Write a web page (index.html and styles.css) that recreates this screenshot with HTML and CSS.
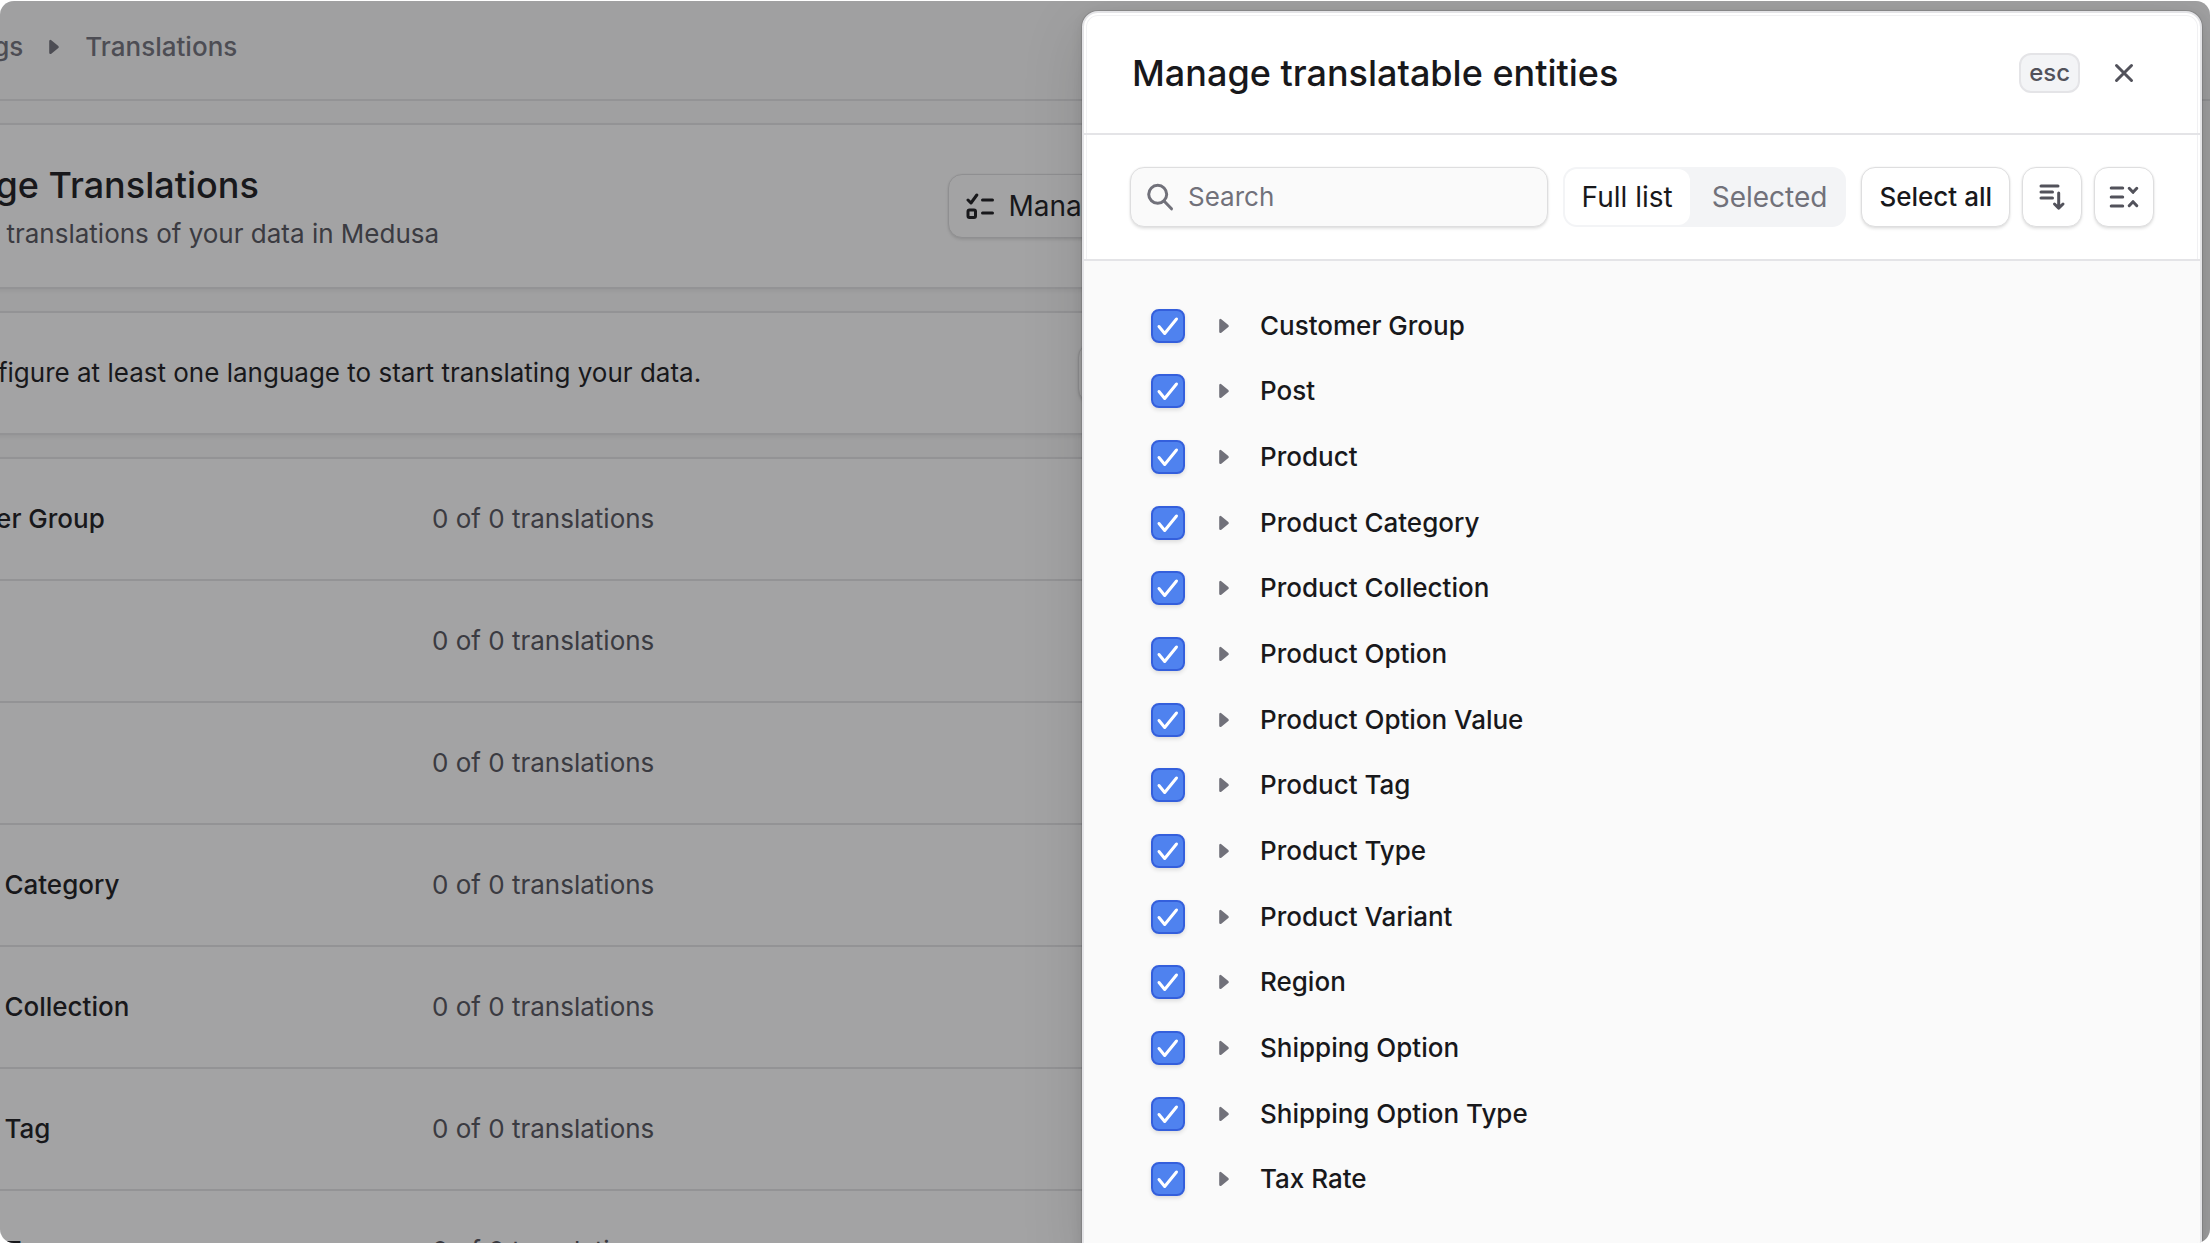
FILE: index.html
```html
<!DOCTYPE html>
<html lang="en">
<head>
<meta charset="utf-8">
<meta name="viewport" content="width=device-width, initial-scale=1">
<title>Translations - Medusa</title>
<link rel="stylesheet" href="styles.css">
</head>
<body>
<svg class="sprite" aria-hidden="true">
  <symbol id="triangle" viewBox="0 0 30 30"><path d="M11.500 9.200v11.600l7-5.800z" fill="currentColor" stroke="currentColor" stroke-width="2.600" stroke-linejoin="round"/></symbol>
</svg>
<div class="frame">
  <div class="page">
    <nav class="topbar" aria-label="Breadcrumb">
      <a href="#settings">Settings</a>
      <svg class="icon" aria-hidden="true"><use href="#triangle"/></svg>
      <span>Translations</span>
    </nav>
    <main class="content">
      <section class="card card-intro">
        <div>
          <h1>Manage Translations</h1>
          <p>Manage translations of your data in Medusa</p>
        </div>
        <button class="button button-large" type="button">
          <svg class="icon icon-line" viewBox="0 0 30 30" aria-hidden="true"><path d="M2 9l3 3 5.800-8M16.500 9h10M16.500 22h10"/><rect x="2" y="19" width="7.500" height="7.500" rx="1.500"/></svg>
          Manage entities
        </button>
      </section>
      <section class="card card-notice">
        <svg class="icon icon-line" viewBox="0 0 30 30" aria-hidden="true"><circle cx="15" cy="15" r="12"/><path d="M15 14v7M15 9v.1"/></svg>
        <p>Configure at least one language to start translating your data.</p>
        <button class="button" type="button">Configure</button>
      </section>
      <section class="card">
        <table class="counts">
          <tbody>
            <tr><th scope="row">Customer Group</th><td>0 of 0 translations</td></tr>
            <tr><th scope="row">Post</th><td>0 of 0 translations</td></tr>
            <tr><th scope="row">Product</th><td>0 of 0 translations</td></tr>
            <tr><th scope="row">Product Category</th><td>0 of 0 translations</td></tr>
            <tr><th scope="row">Product Collection</th><td>0 of 0 translations</td></tr>
            <tr><th scope="row">Product Tag</th><td>0 of 0 translations</td></tr>
            <tr><th scope="row">Product Type</th><td>0 of 0 translations</td></tr>
          </tbody>
        </table>
      </section>
    </main>
  </div>
  <div class="overlay"></div>
  <aside class="drawer" role="dialog" aria-labelledby="drawer-title">
    <header class="drawer-header">
      <h2 id="drawer-title">Manage translatable entities</h2>
      <kbd>esc</kbd>
      <button class="close" type="button" aria-label="Close">
        <svg class="icon icon-line" viewBox="0 0 30 30" aria-hidden="true"><path d="M7.500 7.500l15 15M22.500 7.500l-15 15"/></svg>
      </button>
    </header>
    <div class="toolbar">
      <label class="search">
        <svg class="icon icon-line" viewBox="0 0 30 30" aria-hidden="true"><circle cx="12.700" cy="12.300" r="9"/><path d="M19 19l7.500 7.800"/></svg>
        <input type="search" placeholder="Search" aria-label="Search">
      </label>
      <div class="tabs" role="tablist">
        <button class="tab tab-active" type="button" role="tab" aria-selected="true">Full list</button>
        <button class="tab" type="button" role="tab" aria-selected="false">Selected</button>
      </div>
      <div class="actions">
        <button class="button" type="button">Select all</button>
        <button class="button button-icon" type="button" aria-label="Expand all">
          <svg class="icon icon-line" viewBox="0 0 30 30" aria-hidden="true"><path d="M4 4h17M4 10h11.500M4 16h11.500M21.700 11v15M17.500 22l4.200 4.200L26 22"/></svg>
        </button>
        <button class="button button-icon" type="button" aria-label="Collapse all">
          <svg class="icon icon-line" viewBox="0 0 30 30" aria-hidden="true"><path d="M2.200 6h11.500M2.200 15h11.500M2.200 24h11.500M20.200 6.300l3.800 4 3.800-4M20.200 23.700l3.800-4 3.800 4"/></svg>
        </button>
      </div>
    </div>
    <ul class="entities" id="entities"></ul>
  </aside>
</div>
<script src="entities.js"></script>
</body>
</html>
```
FILE: entities.js
```js
const names = [
  "Customer Group", "Post", "Product", "Product Category", "Product Collection",
  "Product Option", "Product Option Value", "Product Tag", "Product Type",
  "Product Variant", "Region", "Shipping Option", "Shipping Option Type", "Tax Rate"
];

document.getElementById("entities").innerHTML = names.map((name, i) => `
  <li class="entity">
    <input type="checkbox" id="entity-${i}" checked>
    <button class="toggle" type="button" aria-label="Expand ${name}" aria-expanded="false">
      <svg class="icon" aria-hidden="true"><use href="#triangle"/></svg>
    </button>
    <label for="entity-${i}">${name}</label>
  </li>`).join("");
```
FILE: styles.css
```css
:root {
  --text: #18181b;
  --subtle: #52525b;
  --muted: #71717a;
  --line: #e4e4e7;
  --base: #ffffff;
  --soft: #fafafa;
  --component: #f3f4f6;
  --lift: 0 0 0 1px rgba(0, 0, 0, 0.02), 0 2px 3px rgba(0, 0, 0, 0.1);
}

* {
  box-sizing: border-box;
}

body {
  margin: 0;
  background: var(--base);
  color: var(--text);
  font: 500 26px/40px Inter, "Liberation Sans", sans-serif;
}

h1, h2, p, ul {
  margin: 0;
  padding: 0;
  font-weight: 500;
}

button, input {
  font: inherit;
  color: inherit;
}

.sprite {
  display: none;
}

.icon {
  display: block;
  flex: none;
  width: 30px;
  height: 30px;
}

.icon-line {
  fill: none;
  stroke: currentColor;
  stroke-width: 3;
  stroke-linecap: round;
  stroke-linejoin: round;
}

.frame {
  position: relative;
  height: calc(100vh - 1px);
  margin-top: 1px;
  overflow: hidden;
  border-radius: 14px;
  background: var(--soft);
}

/* The page behind the drawer is scrolled sideways past its left edge. */
.page {
  margin-left: -148px;
}

.topbar {
  display: flex;
  align-items: center;
  gap: 16px;
  height: 100px;
  padding: 0 70px 6px;
  border-bottom: 2px solid var(--line);
  color: var(--muted);
}

.topbar a {
  color: inherit;
  text-decoration: none;
}

.content {
  display: flex;
  flex-direction: column;
  gap: 22px;
  max-width: 1433px;
  padding-top: 22px;
}

.card {
  border: 2px solid var(--line);
  border-radius: 16px;
  background: var(--base);
  box-shadow: 0 2px 4px rgba(0, 0, 0, 0.06);
}

.card-intro,
.card-notice {
  display: flex;
  align-items: center;
  padding: 0 46px;
}

.card-intro {
  justify-content: space-between;
  min-height: 166px;
}

.card-intro h1 {
  margin-bottom: 2px;
  font-size: 36px;
  line-height: 54px;
}

.card p {
  font-weight: 400;
}

.card-intro p {
  color: var(--subtle);
}

.card-notice {
  gap: 18px;
  min-height: 124px;
}

.card-notice .button {
  margin-left: auto;
}

.counts {
  width: 100%;
  border-spacing: 0;
}

.counts th,
.counts td {
  height: 122px;
  padding: 0;
  border-bottom: 2px solid var(--line);
  text-align: left;
}

.counts th {
  width: 578px;
  padding-left: 46px;
  font-weight: 500;
}

.counts td {
  color: var(--subtle);
  font-weight: 400;
}

.overlay {
  position: absolute;
  inset: 0;
  background: rgba(24, 24, 27, 0.4);
}

.drawer {
  position: absolute;
  top: 10px;
  right: 8px;
  bottom: -20px;
  display: flex;
  flex-direction: column;
  width: 1120px;
  max-width: calc(100% - 16px);
  border: 2px solid var(--line);
  border-radius: 16px;
  background: var(--base);
  box-shadow:
    inset 0 0 0 2px var(--base),
    inset 0 0 0 3px #f1f1f3,
    0 0 0 1px rgba(0, 0, 0, 0.1),
    0 4px 12px rgba(0, 0, 0, 0.1),
    0 16px 64px rgba(0, 0, 0, 0.12);
}

.drawer-header {
  display: flex;
  align-items: center;
  gap: 14px;
  height: 122px;
  padding: 0 46px 0 48px;
  border-bottom: 2px solid var(--line);
}

.drawer-header h2 {
  flex: 1;
  font-size: 36px;
}

kbd {
  padding: 0 8px;
  border: 2px solid var(--line);
  border-radius: 12px;
  background: var(--component);
  color: var(--subtle);
  font: 500 24px/36px Inter, "Liberation Sans", sans-serif;
}

.close {
  display: grid;
  place-items: center;
  width: 60px;
  height: 60px;
  padding: 0;
  border: 0;
  background: none;
  color: var(--subtle);
}

.toolbar {
  display: flex;
  gap: 15px;
  padding: 32px 46px;
  border-bottom: 2px solid var(--line);
}

.search {
  display: flex;
  flex: 1;
  align-items: center;
  gap: 13px;
  min-width: 0;
  height: 60px;
  padding: 0 14px;
  border: 1px solid #dededf;
  border-radius: 14px;
  background: var(--soft);
  box-shadow: var(--lift);
  color: var(--muted);
}

.search input {
  flex: 1;
  min-width: 0;
  padding: 0;
  border: 0;
  outline: 0;
  background: none;
  font-weight: 400;
}

.search input::placeholder {
  color: var(--muted);
  opacity: 1;
}

.tabs {
  display: flex;
  gap: 5px;
  height: 60px;
  padding: 2px;
  border-radius: 14px;
  background: var(--component);
}

.tab {
  padding: 0 17px;
  border: 0;
  border-radius: 12px;
  background: none;
  color: var(--muted);
  font-size: 28px;
  font-weight: 400;
}

.tab-active {
  background: var(--base);
  color: var(--text);
}

.actions {
  display: flex;
  gap: 12px;
}

.button {
  display: flex;
  align-items: center;
  justify-content: center;
  gap: 12px;
  height: 60px;
  padding: 0 17px;
  border: 1px solid #dededf;
  border-radius: 14px;
  background: var(--base);
  box-shadow: var(--lift);
  white-space: nowrap;
}

.button-large {
  height: 64px;
  font-size: 28px;
  font-weight: 400;
}

.button-icon {
  width: 60px;
  padding: 0;
  color: var(--subtle);
}

.entities {
  flex: 1;
  padding: 32px 67px;
  background: var(--soft);
  list-style: none;
}

.entity {
  display: flex;
  align-items: center;
  height: 66px;
}

.entity:nth-child(3n + 1) {
  height: 65px;
}

.entity input {
  appearance: none;
  flex: none;
  width: 34px;
  height: 34px;
  margin: 0;
  border: 2px solid #345fdc;
  border-radius: 8px;
  background: #4f82ef url("data:image/svg+xml,%3Csvg xmlns='http://www.w3.org/2000/svg' viewBox='0 0 30 30'%3E%3Cpath d='M6 15.500l5.700 7L23.500 8' fill='none' stroke='white' stroke-width='3' stroke-linecap='round' stroke-linejoin='round'/%3E%3C/svg%3E") center / 30px 30px no-repeat;
  box-shadow: 0 2px 4px rgba(0, 0, 0, 0.12);
}

.toggle {
  margin: 0 21px 0 24px;
  padding: 0;
  border: 0;
  background: none;
  color: var(--muted);
}
```
